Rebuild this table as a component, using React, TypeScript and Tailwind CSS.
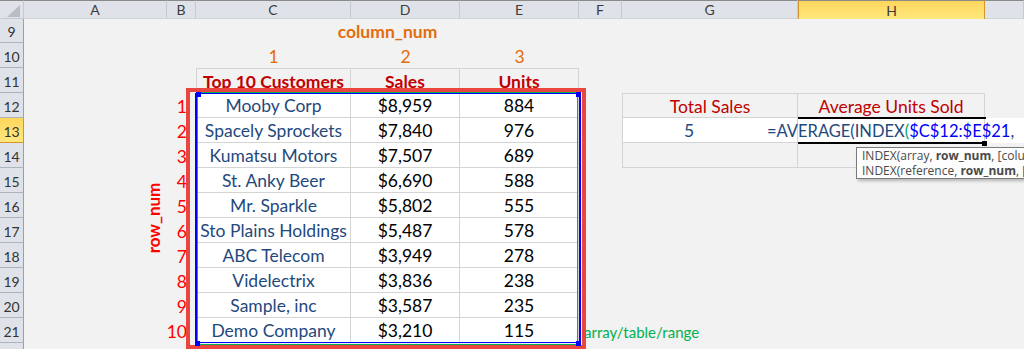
import React from "react";

const data: [string, string, string][] = [
  ["Mooby Corp", "$8,959", "884"],
  ["Spacely Sprockets", "$7,840", "976"],
  ["Kumatsu Motors", "$7,507", "689"],
  ["St. Anky Beer", "$6,690", "588"],
  ["Mr. Sparkle", "$5,802", "555"],
  ["Sto Plains Holdings", "$5,487", "578"],
  ["ABC Telecom", "$3,949", "278"],
  ["Videlectrix", "$3,836", "238"],
  ["Sample, inc", "$3,587", "235"],
  ["Demo Company", "$3,210", "115"],
];

const base = "flex items-center whitespace-nowrap min-w-0 pt-[3px]";
const bd = "border-[#d4d4d4]";

function RowHeader({ n }: { n: number }) {
  const active = n === 13;
  return (
    <div
      className={
        active
          ? "flex items-center justify-center pt-[2px] text-[14px] text-[#333] border-b border-r border-[#d2962c] bg-gradient-to-b from-[#ffd65c] to-[#ffe77d]"
          : "flex items-center justify-center pt-[2px] text-[14px] text-[#333] border-b border-[#aeb4bb] border-r border-r-[#9aa0a8] bg-[#dfe3e9]"
      }
    >
      {n}
    </div>
  );
}

export default function App() {
  const rows: React.ReactNode[] = [];

  rows.push(
    <React.Fragment key="r9">
      <RowHeader n={9} />
      <div className={base} />
      <div className={base} />
      <div className={base} />
      <div className={`${base} justify-center`}>
        <span className="mr-[36px] font-bold text-[17.5px] text-[#e46c0a]">column_num</span>
      </div>
      <div className={base} />
      <div className={base} />
      <div className={base} />
      <div className={base} />
      <div className={base} />
    </React.Fragment>
  );

  rows.push(
    <React.Fragment key="r10">
      <RowHeader n={10} />
      <div className={base} />
      <div className={base} />
      <div className={`${base} justify-center text-[17.5px] text-[#e46c0a]`}>1</div>
      <div className={`${base} justify-center text-[17.5px] text-[#e46c0a]`}>2</div>
      <div className={`${base} justify-center text-[17.5px] text-[#e46c0a]`}>3</div>
      <div className={base} />
      <div className={base} />
      <div className={base} />
      <div className={base} />
    </React.Fragment>
  );

  rows.push(
    <React.Fragment key="r11">
      <RowHeader n={11} />
      <div className={base} />
      <div className={base} />
      <div className={`${base} justify-center font-bold text-[17.5px] text-[#c00000] border ${bd}`}>Top 10 Customers</div>
      <div className={`${base} justify-center font-bold text-[17.5px] text-[#c00000] border-t border-r border-b ${bd}`}>Sales</div>
      <div className={`${base} justify-center font-bold text-[17.5px] text-[#c00000] border-t border-r border-b ${bd}`}>Units</div>
      <div className={base} />
      <div className={base} />
      <div className={base} />
      <div className={base} />
    </React.Fragment>
  );

  data.forEach((d, i) => {
    const n = 12 + i;
    let g: React.ReactNode = <div className={base} />;
    let h: React.ReactNode = <div className={base} />;
    let iCell: React.ReactNode = <div className={base} />;
    let f: React.ReactNode = <div className={base} />;
    if (n === 12) {
      g = <div className={`${base} justify-center text-[17.5px] text-[#c00000] border ${bd}`}>Total Sales</div>;
      h = <div className={`${base} justify-center text-[17.5px] text-[#c00000] border-t border-r border-b ${bd}`}>Average Units Sold</div>;
    } else if (n === 13) {
      g = <div className={`${base} pl-[61px] text-[17.5px] text-[#1f497d] bg-white border-l border-r border-b ${bd}`}>5</div>;
      h = (
        <div className={`${base} relative z-10 text-[16.5px] text-[#1f497d] bg-white border-r border-b ${bd}`}>
          <span className="-ml-[31px]">
            =AVERAGE(INDEX<span className="text-[#00a36b]">(</span>
            <span className="text-[#0000ff]">$C$12:$E$21</span>,
          </span>
        </div>
      );
      iCell = <div className={`${base} bg-white`} />;
    } else if (n === 14) {
      g = <div className={`${base} border-l border-r border-b ${bd}`} />;
      h = <div className={`${base} border-r border-b ${bd}`} />;
    } else if (n === 21) {
      f = (
        <div className={`${base} pl-[5px] text-[15px] text-[#00b050]`}>
          <span>array/table/range</span>
        </div>
      );
    }
    rows.push(
      <React.Fragment key={`r${n}`}>
        <RowHeader n={n} />
        <div className={base} />
        <div className={`${base} justify-end pr-[9px] text-[17.5px] text-[#ff0000]`}>{i + 1}</div>
        <div className={`${base} justify-center text-[17.5px] text-[#1f497d] bg-white border-l border-r border-b ${bd}`}>{d[0]}</div>
        <div className={`${base} justify-center text-[17.5px] text-black bg-white border-r border-b ${bd}`}>{d[1]}</div>
        <div className={`${base} justify-center text-[17.5px] text-black bg-white border-r border-b ${bd}`}>{d[2]}</div>
        {f}
        {g}
        {h}
        {iCell}
      </React.Fragment>
    );
  });

  rows.push(
    <React.Fragment key="r22">
      <div className="border-r border-r-[#9aa0a8] bg-[#dfe3e9]" />
      <div className={base} />
      <div className={base} />
      <div className={base} />
      <div className={base} />
      <div className={base} />
      <div className={base} />
      <div className={base} />
      <div className={base} />
      <div className={base} />
    </React.Fragment>
  );

  const letters = ["A", "B", "C", "D", "E", "F", "G", "H", ""];

  return (
    <div className="relative w-[1024px] h-[349px] overflow-hidden bg-[#f2f2f2] font-[Lato,sans-serif]">
      <div className="grid w-full h-full grid-cols-[24px_143px_29px_155px_109px_119px_43px_176px_187px_1fr] grid-rows-[19px_24px_repeat(12,25px)_1fr]">
        <div className="relative bg-[#dfe3e9] border-t border-t-[#8a8a8a] border-r border-r-[#c5cad0] border-b border-b-[#c5cad0]">
          <svg className="absolute left-0 top-0" width="24" height="18" viewBox="0 0 24 18">
            <polygon points="7,16 20,16 20,4" fill="#b8bdc3" />
          </svg>
        </div>
        {letters.map((l, i) =>
          l === "H" ? (
            <div
              key={i}
              className="flex items-center justify-center text-[14px] text-[#3c3c3c] border-t border-t-[#8a8a8a] border-l border-r border-[#d2962c] bg-gradient-to-b from-[#ffd65c] to-[#ffe77d]"
            >
              {l}
            </div>
          ) : (
            <div
              key={i}
              className="flex items-center justify-center text-[14px] text-[#3c3c3c] bg-[#dfe3e9] border-t border-t-[#8a8a8a] border-r border-r-[#c5cad0] border-b border-b-[#d0d4d9]"
            >
              {l}
            </div>
          )
        )}
        {rows}
      </div>

      <div className="absolute left-[154px] top-[218px] -translate-x-1/2 -translate-y-1/2 -rotate-90 font-bold text-[17px] text-[#ff0000] whitespace-nowrap">
        row_num
      </div>

      <div className="absolute z-20 left-[798px] top-[117px] w-[188px] h-[2px] bg-black" />
      <div className="absolute z-20 left-[798px] top-[142px] w-[184px] h-[2px] bg-black" />
      <div className="absolute z-20 left-[982px] top-[141px] w-[5px] h-[5px] bg-black" />

      <div className="absolute left-[186px] top-[88px] w-[400px] h-[261px] border-4 border-[#e8463f]" />
      <div className="absolute left-[197px] top-[92px] w-[381px] h-[253px] border border-[#00b050]" />
      <div className="absolute left-[195px] top-[93px] w-[386px] h-[250px] border-l-2 border-r-2 border-t border-b border-[#0000ff]" />
      <div className="absolute left-[196px] top-[92px] w-[5px] h-[5px] bg-[#0000ff]" />
      <div className="absolute left-[576px] top-[92px] w-[5px] h-[5px] bg-[#0000ff]" />
      <div className="absolute left-[195px] top-[341px] w-[5px] h-[5px] bg-[#0000ff]" />
      <div className="absolute left-[576px] top-[341px] w-[5px] h-[5px] bg-[#0000ff]" />

      <div className="absolute z-30 left-[856px] top-[147px] w-[180px] h-[32px] overflow-hidden bg-[#fdfdfd] border border-[#7a7a7a] shadow-[2px_2px_3px_rgba(0,0,0,0.25)] px-[5px] text-[12px] leading-[15px] text-[#4a4a4a] font-['Open_Sans',sans-serif] whitespace-nowrap">
        <div>
          INDEX(array, <b>row_num</b>, [column_num])
        </div>
        <div>
          INDEX(reference, <b>row_num</b>, [column_num], [area_num])
        </div>
      </div>
    </div>
  );
}
